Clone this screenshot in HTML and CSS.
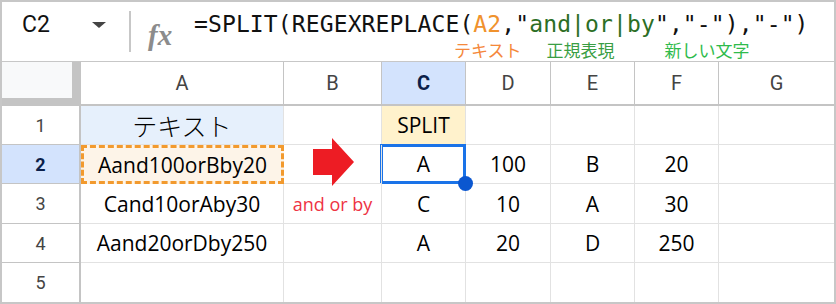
FILE: index.html
```html
<!DOCTYPE html>
<html lang="ja">
<head>
  <meta charset="UTF-8" />
  <title>SPLIT + REGEXREPLACE</title>
  <link rel="stylesheet" href="styles.css">
</head>
<body>
  <div class="sheet">
    <div class="formula-bar">
      <div class="namebox">C2</div>
      <div class="caret"></div>
      <div class="sep"></div>
      <div class="fx">fx</div>
      <div class="formula">
        <div class="code">=SPLIT(REGEXREPLACE(<span class="ref">A2</span>,"<span class="str">and|or|by</span>","-"),"-")</div>
        <div class="notes">
          <span class="n1">テキスト</span>
          <span class="n2">正規表現</span>
          <span class="n3">新しい文字</span>
        </div>
      </div>
    </div>

    <div class="grid">
      <!-- header row -->
      <div class="corner"></div>
      <div class="colhead">A</div>
      <div class="colhead">B</div>
      <div class="colhead active">C</div>
      <div class="colhead">D</div>
      <div class="colhead">E</div>
      <div class="colhead">F</div>
      <div class="colhead last">G</div>

      <!-- row 1 -->
      <div class="rowhead">1</div>
      <div class="cell title">テキスト</div>
      <div class="cell"></div>
      <div class="cell label">SPLIT</div>
      <div class="cell"></div>
      <div class="cell"></div>
      <div class="cell"></div>
      <div class="cell last"></div>

      <!-- row 2 -->
      <div class="rowhead active">2</div>
      <div class="cell source">Aand100orBby20</div>
      <div class="cell arrow">
        <svg width="42" height="49" viewBox="0 0 42 49"><polygon points="0,11 19,11 19,0 41,24 19,48 19,37 0,37" fill="#ed1c24"/></svg>
      </div>
      <div class="cell selected">A<span class="handle"></span></div>
      <div class="cell">100</div>
      <div class="cell">B</div>
      <div class="cell">20</div>
      <div class="cell last"></div>

      <!-- row 3 -->
      <div class="rowhead">3</div>
      <div class="cell">Cand10orAby30</div>
      <div class="cell note">and or by</div>
      <div class="cell">C</div>
      <div class="cell">10</div>
      <div class="cell">A</div>
      <div class="cell">30</div>
      <div class="cell last"></div>

      <!-- row 4 -->
      <div class="rowhead">4</div>
      <div class="cell">Aand20orDby250</div>
      <div class="cell"></div>
      <div class="cell">A</div>
      <div class="cell">20</div>
      <div class="cell">D</div>
      <div class="cell">250</div>
      <div class="cell last"></div>

      <!-- row 5 -->
      <div class="rowhead bottom">5</div>
      <div class="cell bottom"></div>
      <div class="cell bottom"></div>
      <div class="cell bottom"></div>
      <div class="cell bottom"></div>
      <div class="cell bottom"></div>
      <div class="cell bottom"></div>
      <div class="cell bottom last"></div>
    </div>
  </div>
</body>
</html>
```

FILE: styles.css
```css
* { box-sizing: border-box; margin: 0; padding: 0; }
body {
  background: #fff;
  font-family: Roboto, "Noto Sans", sans-serif;
  color: #202124;
}
.sheet {
  width: 836px;
  height: 304px;
  border: 2px solid #c7c7c7;
  overflow: hidden;
}

/* formula bar */
.formula-bar {
  display: flex;
  align-items: flex-start;
  height: 60px;
  border-bottom: 1px solid #c7c7c7;
}
.namebox {
  margin: 10px 0 0 20px;
  width: 70px;
  font-size: 23px;
  line-height: 26px;
  color: #111;
}
.caret {
  margin-top: 20px;
  width: 0;
  height: 0;
  border-left: 7px solid transparent;
  border-right: 7px solid transparent;
  border-top: 6px solid #444;
}
.sep {
  margin: 9px 0 0 23px;
  width: 2px;
  height: 41px;
  background: #c7c7c7;
}
.fx {
  margin: 20px 0 0 17px;
  width: 29px;
  font-family: "Liberation Serif", serif;
  font-style: italic;
  font-weight: bold;
  font-size: 29px;
  line-height: 26px;
  color: #8c8c8c;
}
.formula { margin: 9px 0 0 17px; }
.code {
  font-family: "DejaVu Sans Mono", monospace;
  font-size: 23px;
  line-height: 26px;
  letter-spacing: 0.12px;
  color: #111;
  white-space: nowrap;
}
.code .ref { color: #f0922d; }
.code .str { color: #2c6e25; }
.notes {
  display: flex;
  margin-top: 3px;
  font-family: "Noto Sans CJK JP", sans-serif;
  font-size: 17px;
  line-height: 20px;
  white-space: nowrap;
}
.n1 { margin-left: 260px; color: #f5883a; }
.n2 { margin-left: 25px; color: #3a9e44; }
.n3 { margin-left: 50px; color: #2fbb4c; }

/* grid */
.grid {
  display: grid;
  grid-template-columns: 79px 203px 98px 84px 85px 84px 84px 115px;
  grid-template-rows: 44px 39px 39px 40px 39px 39px;
}
.corner {
  background: #f8f9fa;
  border-right: 9px solid #c4c4c4;
  border-bottom: 8px solid #c4c4c4;
}
.colhead {
  display: flex;
  align-items: center;
  justify-content: center;
  border-right: 1px solid #c4c4c4;
  border-bottom: 2px solid #c4c4c4;
  font-size: 20px;
  color: #444;
}
.colhead.last { border-right: none; }
.colhead.active, .rowhead.active {
  background: #d3e3fd;
  color: #0b1f4a;
  font-weight: bold;
}
.rowhead {
  display: flex;
  align-items: center;
  justify-content: center;
  border-right: 2px solid #c4c4c4;
  border-bottom: 1px solid #c4c4c4;
  font-size: 18px;
  color: #444;
}
.cell {
  position: relative;
  display: flex;
  align-items: center;
  justify-content: center;
  border-right: 1px solid #e2e2e2;
  border-bottom: 1px solid #e2e2e2;
  font-family: "Open Sans", sans-serif;
  font-size: 21px;
  color: #000;
  white-space: nowrap;
}
.cell.last { border-right: none; }
.cell.bottom, .rowhead.bottom { border-bottom: none; }

.cell.title {
  background: #e6f0fc;
  font-family: "Noto Sans CJK JP", sans-serif;
  font-weight: 300;
  font-size: 25px;
}
.cell.label { background: #fff2cc; }
.cell.source {
  background: #fdf4e8;
  border: 3px dashed #f29a2e;
}
.cell.arrow { overflow: visible; z-index: 1; }
.cell.arrow svg { flex: none; margin-top: -3px; margin-left: 2px; }
.cell.note {
  font-size: 18px;
  color: #ee3344;
}
.cell.selected::after {
  content: "";
  position: absolute;
  top: -1px;
  left: -2px;
  right: -1px;
  bottom: -1px;
  border: 3px solid #1a73e8;
}
.handle {
  position: absolute;
  right: -8px;
  bottom: -8px;
  width: 15px;
  height: 15px;
  border-radius: 50%;
  background: #0b57d0;
  z-index: 2;
}
```
